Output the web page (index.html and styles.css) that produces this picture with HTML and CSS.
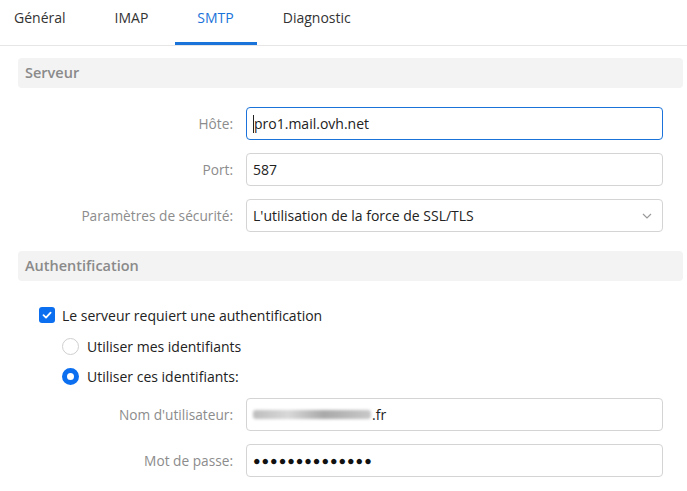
FILE: index.html
```html
<!DOCTYPE html>
<html lang="fr">
<head>
<meta charset="utf-8">
<link rel="stylesheet" href="styles.css">
</head>
<body>
<nav class="tabs">
  <div class="tab">Général</div>
  <div class="tab">IMAP</div>
  <div class="tab active">SMTP</div>
  <div class="tab">Diagnostic</div>
</nav>
<main class="content">
  <div class="section-head">Serveur</div>
  <div class="rows first">
    <div class="row">
      <label class="lbl">Hôte:</label>
      <div class="field focus"><span class="caret"></span>pro1.mail.ovh.net</div>
    </div>
    <div class="row">
      <label class="lbl">Port:</label>
      <div class="field">587</div>
    </div>
    <div class="row">
      <label class="lbl">Paramètres de sécurité:</label>
      <div class="field select">L'utilisation de la force de SSL/TLS
        <svg class="chev" width="10" height="6" viewBox="0 0 10 6"><path d="M1 1 L5 5 L9 1" fill="none" stroke="#9a9a9a" stroke-width="1.2"/></svg>
      </div>
    </div>
  </div>
  <div class="section-head">Authentification</div>
  <div class="auth">
    <div class="check-line">
      <span class="checkbox"><svg width="12" height="12" viewBox="0 0 12 12"><path d="M2.5 6.2 L5 8.6 L9.6 3.6" fill="none" stroke="#fff" stroke-width="1.8" stroke-linecap="round" stroke-linejoin="round"/></svg></span>
      <span>Le serveur requiert une authentification</span>
    </div>
    <div class="radio-line">
      <span class="radio"></span>
      <span>Utiliser mes identifiants</span>
    </div>
    <div class="radio-line">
      <span class="radio on"></span>
      <span>Utiliser ces identifiants:</span>
    </div>
  </div>
  <div class="rows second">
    <div class="row">
      <label class="lbl">Nom d'utilisateur:</label>
      <div class="field"><span class="blur"></span>.fr</div>
    </div>
    <div class="row">
      <label class="lbl">Mot de passe:</label>
      <div class="field"><span class="dots">●●●●●●●●●●●●●●</span></div>
    </div>
  </div>
</main>
</body>
</html>
```

FILE: styles.css
```css
* { box-sizing: border-box; }
html, body { margin: 0; padding: 0; background: #fff; }
body {
  font-family: "Open Sans", "Noto Sans", sans-serif;
  font-size: 14px;
  color: #222;
  width: 687px;
  height: 491px;
  overflow: hidden;
}
.tabs {
  display: flex;
  height: 46px;
  border-bottom: 1px solid #e6e6e6;
  padding-left: 14px;
  gap: 49px;
}
.tab {
  position: relative;
  padding-top: 8px;
  line-height: 20px;
  font-size: 14px;
  color: #333;
  height: 45px;
}
.tab.active { color: #1a73d9; }
.tab.active::after {
  content: "";
  position: absolute;
  left: -22px;
  right: -23px;
  bottom: 0;
  height: 3px;
  background: #1a73d9;
}
.content {
  padding: 12px 4px 0 18px;
}
.section-head {
  height: 30px;
  background: #f3f3f3;
  border-radius: 4px;
  padding-left: 7px;
  line-height: 30px;
  font-size: 14.5px;
  font-weight: 600;
  color: #8a8a8a;
}
.rows {
  display: flex;
  flex-direction: column;
  gap: 13px;
  padding-right: 20px;
}
.rows.first { padding-top: 19px; padding-bottom: 19px; }
.rows.second { padding-top: 7px; }
.row {
  display: flex;
  align-items: center;
  gap: 13px;
}
.lbl {
  width: 215px;
  text-align: right;
  color: #8c8c8c;
  font-size: 13.7px;
}
.field {
  flex: 1;
  height: 33px;
  border: 1px solid #d4d4d4;
  border-radius: 4px;
  display: flex;
  align-items: center;
  padding-left: 6px;
  color: #222;
  position: relative;
}
.field.focus { border-color: #1a73d9; }
.caret {
  display: inline-block;
  width: 1px;
  height: 18px;
  background: #222;
}
.select { padding-right: 30px; }
.chev {
  position: absolute;
  right: 10px;
  top: 13px;
}
.auth {
  padding: 18px 0 0 21px;
  display: flex;
  flex-direction: column;
}
.check-line, .radio-line {
  display: flex;
  align-items: center;
  gap: 7px;
  height: 30px;
}
.check-line { height: 32px; }
.radio-line { padding-left: 23px; gap: 8px; }
.checkbox {
  width: 16px;
  height: 16px;
  border-radius: 3px;
  background: #0b6ff0;
  display: flex;
  align-items: center;
  justify-content: center;
}
.radio {
  width: 17px;
  height: 17px;
  border-radius: 50%;
  border: 1px solid #cfcfcf;
  background: #fff;
}
.radio.on {
  border: 5px solid #0b6ff0;
}
.blur {
  display: inline-block;
  width: 118px;
  height: 9px;
  background: linear-gradient(90deg, #bdbdbd, #d8d8d8 30%, #a9a9a9 60%, #c8c8c8);
  filter: blur(1.5px);
  border-radius: 3px;
  margin-right: 1px;
}
.dots {
  font-size: 12.5px;
  letter-spacing: 1px;
  color: #111;
}
```
